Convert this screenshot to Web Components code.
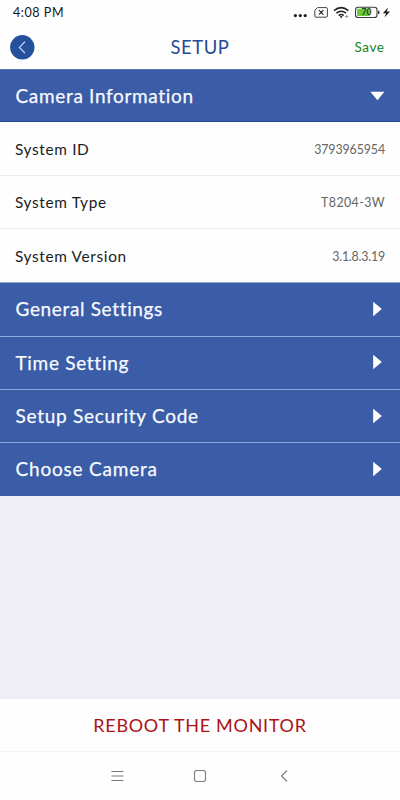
<!DOCTYPE html>
<html lang="en">
<head>
<meta charset="utf-8">
<title>Setup</title>
<style>
    body {
        margin: 0;
        background: #efeef4;
        font-family: Lato, "Noto Sans", sans-serif;
    }
</style>
</head>
<body>
<setup-screen></setup-screen>

<script>
const define = (name, html, setup) => {
    const template = document.createElement('template');
    template.innerHTML = html;

    customElements.define(name, class extends HTMLElement {
        constructor() {
            super();
            this.attachShadow({ mode: 'open' });
            this.shadowRoot.appendChild(template.content.cloneNode(true));
        }

        connectedCallback() {
            if (setup) setup(this);
        }
    });
};

define('status-bar', `
    <style>
        :host {
            display: flex;
            justify-content: space-between;
            box-sizing: border-box;
            height: 25px;
            padding: 0 9px 0 13px;
            background: #fefefe;
            color: #161616;
            font-size: 12.5px;
            line-height: 25px;
            letter-spacing: 0.55px;
        }
        svg { display: block; }
    </style>
    <span>4:08 PM</span>
    <svg width="98" height="25" viewBox="293 0 98 25" fill="none">
        <g fill="#222">
            <circle cx="295.4" cy="15.6" r="1.6"/>
            <circle cx="300.3" cy="15.6" r="1.6"/>
            <circle cx="305.2" cy="15.6" r="1.6"/>
        </g>
        <path d="M317.6 7.6H326.2Q327.4 7.6 327.4 8.8V16Q327.4 17.2 326.2 17.2H316Q314.8 17.2 314.8 16V10.2Z" stroke="#444" stroke-width="1"/>
        <path d="M319 10.2L323.4 14.6M323.4 10.2L319 14.6" stroke="#222" stroke-width="1.2"/>
        <g stroke="#222" stroke-width="1.5">
            <path d="M334 10.6Q341.2 4.6 348.4 10.6"/>
            <path d="M336.4 13.2Q341.2 9.2 346 13.2"/>
            <path d="M338.7 15.6Q341.2 13.6 343.7 15.6"/>
        </g>
        <path d="M339.7 16.6Q341.2 15.5 342.7 16.6L341.2 18.3Z" fill="#222"/>
        <path d="M346.7 14.8V18.2M345 16.5H348.4" stroke="#888" stroke-width=".8"/>
        <rect x="355.5" y="7.3" width="21.5" height="10.2" rx="2.6" stroke="#3c3c3c" stroke-width="1.1"/>
        <rect x="357" y="8.8" width="13" height="7.2" rx="1" fill="#6bc83c"/>
        <path d="M378.7 10.8V14" stroke="#333" stroke-width="1.4"/>
        <text x="366.4" y="15.4" text-anchor="middle" font-size="8.5" font-weight="700" letter-spacing="0" fill="#26401c">70</text>
        <path d="M388 7.6L382.8 13.2H386L384.5 17.6L390 11.6H386.8Z" fill="#222"/>
    </svg>
`);

define('title-bar', `
    <style>
        :host {
            display: grid;
            grid-template-columns: 80px 1fr 80px;
            align-items: center;
            box-sizing: border-box;
            height: 44px;
            padding: 0 10px;
            background: #fefefe;
        }
        svg { display: block; }
        .title {
            text-align: center;
            color: #244b93;
            font-size: 18.4px;
            letter-spacing: 0.6px;
        }
        .save {
            padding-right: 5.5px;
            text-align: right;
            color: #12861a;
            font-size: 13.5px;
            letter-spacing: 0.6px;
        }
    </style>
    <svg width="25" height="25" viewBox="0 0 25 25">
        <circle cx="12.3" cy="12.3" r="12.2" fill="#25509b"/>
        <path d="M15 6.7L9.4 12.4L15 18.1" fill="none" stroke="#dbe6fb" stroke-width="1.1"/>
    </svg>
    <span class="title"><slot></slot></span>
    <span class="save"><slot name="action"></slot></span>
`);

define('menu-section', `
    <style>
        :host {
            display: flex;
            align-items: center;
            justify-content: space-between;
            box-sizing: border-box;
            height: 53.33px;
            padding: 0 15px 1px 15.5px;
            background: #3b5ca6;
            border-top: 1px solid #8ea9dc;
            color: #f7faff;
            font-size: 19px;
            -webkit-text-stroke: 0.25px;
        }
        :host([open]) {
            padding-bottom: 0;
            border-top-color: #5b76ae;
            border-bottom: 1px solid #24498f;
        }
        svg { display: block; }
        .down, :host([open]) .right { display: none; }
        :host([open]) .down { display: block; }
    </style>
    <slot></slot>
    <svg class="right" width="12" height="16" viewBox="0 0 12 16"><path d="M0.2 0.8L8.8 8L0.2 15.2Z" fill="#fff"/></svg>
    <svg class="down" width="15" height="10" viewBox="0 0 15 10"><path d="M0.4 0.8H14.4L7.4 9.2Z" fill="#fff"/></svg>
`, el => {
    el.style.letterSpacing = el.getAttribute('spacing') || '';
});

define('info-row', `
    <style>
        :host {
            display: flex;
            align-items: center;
            justify-content: space-between;
            box-sizing: border-box;
            height: 53.33px;
            padding: 1px 15px 0;
            background: #fefefe;
            border-bottom: 1px solid #ededed;
            color: #1c1c1c;
            font-size: 15.4px;
            letter-spacing: 0.65px;
        }
        :host(:last-of-type) { border-bottom-color: #fefefe; }
        .value {
            padding-top: 1px;
            color: #666;
            font-size: 12.4px;
            letter-spacing: 0;
        }
    </style>
    <slot></slot>
    <span class="value"></span>
`, el => {
    const value = el.shadowRoot.querySelector('.value');
    value.textContent = el.getAttribute('value');
    value.style.letterSpacing = el.getAttribute('spacing') || '';
});

define('reboot-button', `
    <style>
        :host {
            display: block;
            box-sizing: border-box;
            height: 53px;
            background: #fefefe;
            border-bottom: 1px solid #f3f3f3;
            color: #ac1214;
            font-size: 18px;
            line-height: 53px;
            text-align: center;
            letter-spacing: 0.7px;
        }
    </style>
    <slot></slot>
`);

define('nav-bar', `
    <style>
        :host {
            display: block;
            height: 48px;
            background: #fefefe;
        }
        svg { display: block; }
    </style>
    <svg width="400" height="48" viewBox="0 752 400 48" fill="none" stroke="#777" stroke-width="1.1">
        <path d="M111.5 771.5H123.5M111.5 776H123.5M111.5 780.5H123.5"/>
        <rect x="194.5" y="770.5" width="11" height="11" rx="2.4"/>
        <path d="M287 770.5L281.5 776L287 781.5"/>
    </svg>
`);

define('setup-screen', `
    <style>
        :host {
            display: flex;
            flex-direction: column;
            width: 400px;
            height: 800px;
            overflow: hidden;
        }
        main { flex: 1; }
    </style>
    <status-bar></status-bar>
    <title-bar>SETUP<span slot="action">Save</span></title-bar>
    <main>
        <menu-section open spacing="0.67px">Camera Information</menu-section>
        <info-row value="3793965954" spacing="-0.1px">System ID</info-row>
        <info-row value="T8204-3W" spacing="0.4px">System Type</info-row>
        <info-row value="3.1.8.3.19" spacing="-0.2px">System Version</info-row>
        <menu-section spacing="0.65px">General Settings</menu-section>
        <menu-section spacing="0.7px">Time Setting</menu-section>
        <menu-section spacing="0.73px">Setup Security Code</menu-section>
        <menu-section spacing="0.8px">Choose Camera</menu-section>
    </main>
    <reboot-button>REBOOT THE MONITOR</reboot-button>
    <nav-bar></nav-bar>
`);
</script>
</body>
</html>
